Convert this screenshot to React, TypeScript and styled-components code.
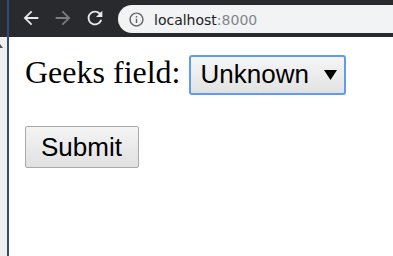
import * as React from "react";
import styled, { createGlobalStyle } from "styled-components";

const GlobalStyle = createGlobalStyle`
  html, body {
    margin: 0;
    padding: 0;
    background: #ffffff;
  }
  body {
    width: 393px;
    height: 256px;
    overflow: hidden;
  }
`;

function BackIcon({ color }: { color: string }) {
  return (
    <svg width="22" height="22" viewBox="0 0 24 24" fill={color}>
      <path d="M20 11H7.83l5.59-5.59L12 4l-8 8 8 8 1.41-1.41L7.83 13H20v-2z" />
    </svg>
  );
}

function ForwardIcon({ color }: { color: string }) {
  return (
    <svg width="22" height="22" viewBox="0 0 24 24" fill={color}>
      <path d="M4 11h12.17l-5.59-5.59L12 4l8 8-8 8-1.41-1.41L16.17 13H4v-2z" />
    </svg>
  );
}

function ReloadIcon({ color }: { color: string }) {
  return (
    <svg width="22" height="22" viewBox="0 0 24 24" fill={color}>
      <path d="M17.65 6.35C16.2 4.9 14.21 4 12 4c-4.42 0-7.99 3.58-7.99 8s3.57 8 7.99 8c3.73 0 6.84-2.55 7.73-6h-2.08c-.82 2.33-3.04 4-5.65 4-3.31 0-6-2.69-6-6s2.69-6 6-6c1.66 0 3.140.69 4.22 1.78L13 11h7V4l-2.35 2.35z" />
    </svg>
  );
}

function InfoIcon() {
  return (
    <svg width="17" height="17" viewBox="0 0 24 24" fill="#5f6368">
      <path d="M11 7h2v2h-2zm0 4h2v6h-2zm1-9C6.48 2 2 6.48 2 12s4.48 10 10 10 10-4.48 10-10S17.52 2 12 2zm0 18c-4.41 0-8-3.59-8-8s3.59-8 8-8 8 3.59 8 8-3.59 8-8 8z" />
    </svg>
  );
}

function CaretIcon() {
  return (
    <svg width="13" height="10" viewBox="0 0 13 10">
      <polygon points="0,0 13,0 6.5,10" fill="#000000" />
    </svg>
  );
}

export default function App() {
  return (
    <>
      <GlobalStyle />
      <Window>
        <TopBar>
          <Edge />
          <Divider />
          <NavButtons>
            <NavButton aria-label="Back">
              <BackIcon color="#e8eaed" />
            </NavButton>
            <NavButton aria-label="Forward">
              <ForwardIcon color="#7b7d80" />
            </NavButton>
            <NavButton aria-label="Reload">
              <ReloadIcon color="#e8eaed" />
            </NavButton>
          </NavButtons>
          <Omnibox>
            <InfoIcon />
            <Url>
              localhost<Port>:8000</Port>
            </Url>
          </Omnibox>
        </TopBar>
        <Body>
          <Gutter>
            <ScrollArrow />
          </Gutter>
          <Divider />
          <Content>
            <FieldRow>
              <Label>Geeks field:</Label>
              <SelectBox role="combobox" aria-expanded={false}>
                <SelectValue>Unknown</SelectValue>
                <Caret>
                  <CaretIcon />
                </Caret>
              </SelectBox>
            </FieldRow>
            <SubmitButton type="submit">Submit</SubmitButton>
          </Content>
        </Body>
      </Window>
    </>
  );
}

const Window = styled.div`
  display: flex;
  flex-direction: column;
  width: 393px;
  height: 256px;
`;

const TopBar = styled.header`
  display: flex;
  align-items: stretch;
  height: 37px;
  background: #292a2d;
  flex-shrink: 0;
`;

const Edge = styled.div`
  width: 7px;
`;

const Divider = styled.div`
  width: 2px;
  background: #2b4e72;
  flex-shrink: 0;
`;

const NavButtons = styled.div`
  display: flex;
  align-items: center;
  gap: 10px;
  padding-left: 11px;
`;

const NavButton = styled.div`
  display: flex;
  align-items: center;
  justify-content: center;
  width: 22px;
  height: 22px;
  margin-top: -1px;
`;

const Omnibox = styled.div`
  display: flex;
  align-items: center;
  gap: 9px;
  flex: 1;
  margin: 5px 0 4px 12px;
  padding-left: 10px;
  border-radius: 14px 0 0 14px;
  background: #f1f3f4;
`;

const Url = styled.span`
  font-family: "DejaVu Sans", sans-serif;
  font-size: 14px;
  color: #202124;
  margin-top: 1px;
`;

const Port = styled.span`
  color: #80868b;
`;

const Body = styled.div`
  display: flex;
  flex: 1;
  min-height: 0;
`;

const Gutter = styled.div`
  width: 7px;
  background: #efefef;
  padding-top: 7px;
`;

const ScrollArrow = styled.div`
  width: 0;
  height: 0;
  border-right: 3px solid transparent;
  border-bottom: 4px solid #505050;
`;

const Content = styled.main`
  display: flex;
  flex-direction: column;
  align-items: flex-start;
  padding: 17px 16px;
  flex: 1;
`;

const FieldRow = styled.div`
  display: flex;
  align-items: baseline;
  gap: 8px;
`;

const Label = styled.span`
  font-family: "Liberation Serif", serif;
  font-size: 32px;
  color: #000000;
`;

const SelectBox = styled.div`
  display: inline-flex;
  align-items: baseline;
  box-sizing: border-box;
  width: 157px;
  height: 40px;
  padding: 2px 7px 4px 10px;
  border: 2px solid #5c9cf6;
  border-radius: 3px;
  background: linear-gradient(#f6f6f6, #e2e2e2);
  font-family: "Liberation Sans", Arial, sans-serif;
  font-size: 26px;
  line-height: 30px;
  color: #000000;
`;

const SelectValue = styled.span`
  flex: 1;
`;

const Caret = styled.span`
  display: inline-flex;
  align-self: center;
  margin-top: 2px;
`;

const SubmitButton = styled.button`
  box-sizing: border-box;
  margin-top: 31px;
  width: 114px;
  height: 42px;
  padding: 0 15px;
  border: 1px solid #a9a9a9;
  border-radius: 2px;
  background: linear-gradient(#f4f4f4, #e0e0e0);
  font-family: "Liberation Sans", Arial, sans-serif;
  font-size: 26px;
  line-height: 40px;
  color: #000000;
  text-align: left;
`;
